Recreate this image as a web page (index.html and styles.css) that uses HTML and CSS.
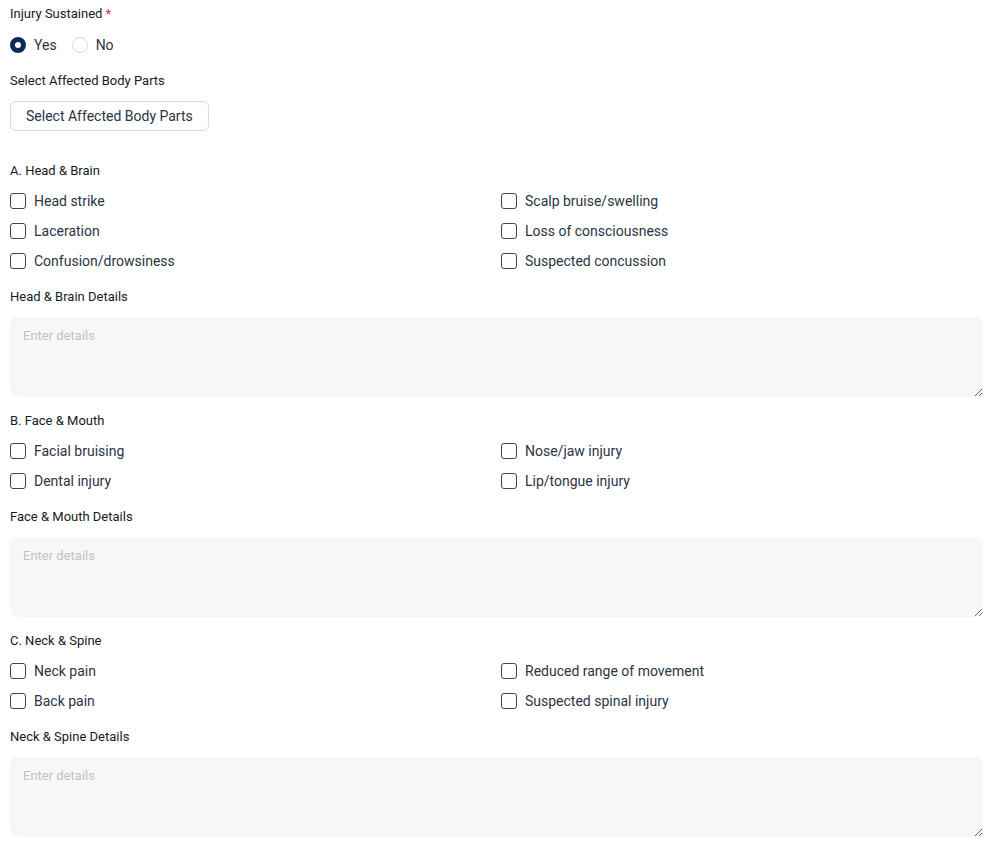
FILE: index.html
```html
<!DOCTYPE html>
<html lang="en">
<head>
<meta charset="utf-8">
<title>Injury Form</title>
<link rel="stylesheet" href="styles.css">
</head>
<body>
<form class="form">
  <div class="field-label top-label">Injury Sustained <span class="req">*</span></div>
  <div class="radio-row">
    <label class="radio"><span class="radio-dot checked"></span><span>Yes</span></label>
    <label class="radio"><span class="radio-dot"></span><span>No</span></label>
  </div>
  <div class="field-label">Select Affected Body Parts</div>
  <button type="button" class="btn">Select Affected Body Parts</button>

  <section class="section first">
    <div class="section-title">A. Head &amp; Brain</div>
    <div class="check-grid">
      <label class="check"><span class="box"></span>Head strike</label>
      <label class="check"><span class="box"></span>Scalp bruise/swelling</label>
      <label class="check"><span class="box"></span>Laceration</label>
      <label class="check"><span class="box"></span>Loss of consciousness</label>
      <label class="check"><span class="box"></span>Confusion/drowsiness</label>
      <label class="check"><span class="box"></span>Suspected concussion</label>
    </div>
    <div class="details-label">Head &amp; Brain Details</div>
    <textarea class="details" placeholder="Enter details"></textarea>
  </section>

  <section class="section">
    <div class="section-title">B. Face &amp; Mouth</div>
    <div class="check-grid">
      <label class="check"><span class="box"></span>Facial bruising</label>
      <label class="check"><span class="box"></span>Nose/jaw injury</label>
      <label class="check"><span class="box"></span>Dental injury</label>
      <label class="check"><span class="box"></span>Lip/tongue injury</label>
    </div>
    <div class="details-label">Face &amp; Mouth Details</div>
    <textarea class="details" placeholder="Enter details"></textarea>
  </section>

  <section class="section">
    <div class="section-title">C. Neck &amp; Spine</div>
    <div class="check-grid">
      <label class="check"><span class="box"></span>Neck pain</label>
      <label class="check"><span class="box"></span>Reduced range of movement</label>
      <label class="check"><span class="box"></span>Back pain</label>
      <label class="check"><span class="box"></span>Suspected spinal injury</label>
    </div>
    <div class="details-label">Neck &amp; Spine Details</div>
    <textarea class="details" placeholder="Enter details"></textarea>
  </section>
</form>
</body>
</html>
```

FILE: styles.css
```css
* { box-sizing: border-box; }
html, body { margin: 0; padding: 0; background: #ffffff; }
body {
  font-family: Roboto, "Liberation Sans", Arial, sans-serif;
  color: #1c2230;
}
.form {
  padding: 6px 10px 0 10px;
  display: flex;
  flex-direction: column;
}
.field-label {
  font-size: 13px;
  line-height: 16px;
  color: #161b26;
}
.req { color: #e5243b; }
.radio-row {
  display: flex;
  align-items: center;
  gap: 15px;
  height: 20px;
  margin: 13px 0 18px 0;
}
.radio {
  display: flex;
  align-items: center;
  gap: 8px;
  font-size: 14px;
  color: #2b3445;
}
.radio-dot {
  width: 16px;
  height: 16px;
  border-radius: 50%;
  border: 1px solid #d9d9d9;
  background: #fff;
  display: inline-block;
}
.radio-dot.checked {
  border: 5px solid #0d2b55;
  background: #fff;
}
.btn {
  align-self: flex-start;
  margin-top: 12px;
  height: 30px;
  padding: 0 15px;
  white-space: nowrap;
  border: 1px solid #d9d9d9;
  border-radius: 6px;
  background: #fff;
  font-family: inherit;
  font-size: 14px;
  color: #2b3445;
  cursor: pointer;
}
.section { display: flex; flex-direction: column; margin-top: 16px; }
.section.first { margin-top: 32px; }
.section-title {
  font-size: 13px;
  line-height: 16px;
  color: #161b26;
  margin-bottom: 7px;
}
.check-grid {
  display: grid;
  grid-template-columns: 1fr 1fr;
  column-gap: 9px;
}
.check {
  display: flex;
  align-items: center;
  gap: 8px;
  height: 30px;
  font-size: 14px;
  color: #2b3445;
}
.box {
  width: 16px;
  height: 16px;
  border: 1.5px solid #3b4658;
  border-radius: 3px;
  background: #fff;
  flex: none;
}
.details-label {
  font-size: 13px;
  line-height: 16px;
  color: #161b26;
  margin-top: 13px;
  margin-bottom: 12px;
}
.details {
  display: block;
  width: 100%;
  height: 80px;
  border: none;
  border-radius: 8px;
  background: #f7f7f7;
  padding: 11px 13px 10px 13px;
  font-family: inherit;
  font-size: 13px;
  color: #2b3445;
  resize: vertical;
  outline: none;
}
.details::placeholder { color: #c2c2c6; }
```
